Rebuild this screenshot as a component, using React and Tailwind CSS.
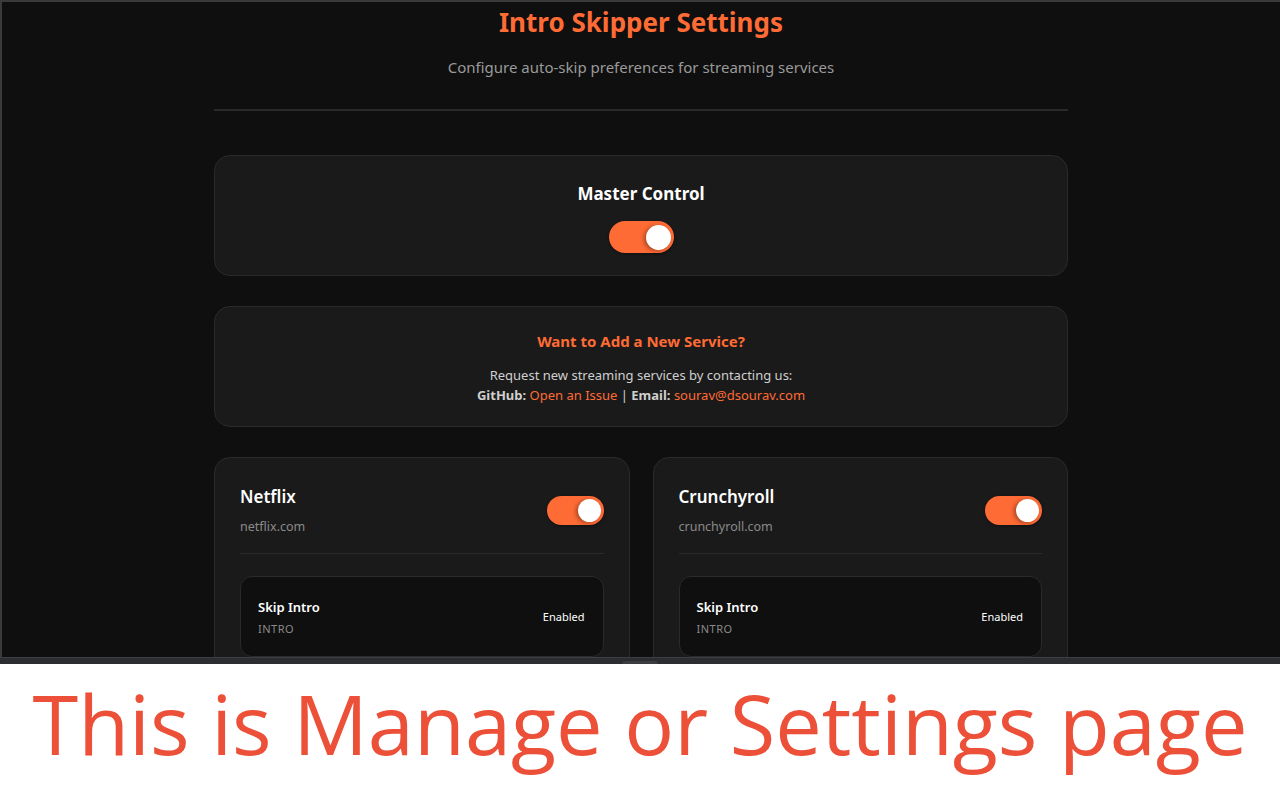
import React from "react";

const font = { fontFamily: '"Noto Sans", "Open Sans", sans-serif' };

const Toggle = ({ size = "lg" }) => {
  const big = size === "lg";
  return (
    <button
      className={
        big
          ? "w-[65px] h-[32px] rounded-full bg-[#ff6b35] flex items-center justify-end pr-[3px] shadow-[0_1px_3px_rgba(0,0,0,0.4)]"
          : "w-[57px] h-[29px] rounded-full bg-[#ff6b35] flex items-center justify-end pr-[3px] shadow-[0_1px_3px_rgba(0,0,0,0.4)]"
      }
    >
      <span
        className={
          big
            ? "w-[25px] h-[25px] rounded-full bg-white shadow-[-2px_1px_4px_rgba(0,0,0,0.35)]"
            : "w-[23px] h-[23px] rounded-full bg-white shadow-[-2px_1px_4px_rgba(0,0,0,0.35)]"
        }
      />
    </button>
  );
};

const ServiceCard = ({ name, domain }) => (
  <div className="bg-[#1a1a1a] border border-[#2a2a2a] rounded-[16px] px-[25px] pt-[26px] h-[260px]">
    <div className="flex items-center justify-between pb-[16px] border-b border-[#2a2a2a]">
      <div>
        <h3 className="text-[17px] leading-[26px] font-semibold text-white">{name}</h3>
        <p className="mt-[7px] text-[12.5px] leading-[20px] text-[#8a8a8a]">{domain}</p>
      </div>
      <Toggle size="sm" />
    </div>
    <div className="mt-[22px] h-[81px] bg-[#0f0f0f] border border-[#2a2a2a] rounded-[12px] pl-[17px] pr-[18px] flex items-center justify-between">
      <div className="pt-[1px]">
        <p className="text-[13px] leading-[20px] font-semibold text-white">Skip Intro</p>
        <p className="mt-[4px] text-[11px] leading-[16px] tracking-[0.5px] text-[#8a8a8a]">INTRO</p>
      </div>
      <span className="text-[11px] leading-[16px] text-white">Enabled</span>
    </div>
  </div>
);

export default function App() {
  return (
    <div className="w-[1280px] h-[800px] bg-white overflow-hidden" style={font}>
      <div className="h-[657px] bg-[#0f0f0f] border-t-2 border-l-2 border-[#3a3a3a] overflow-hidden">
        <div className="w-[854px] ml-[212px] pt-[3px]">
          <header className="text-center pb-[31px] border-b-2 border-[#2a2a2a]">
            <h1 className="text-[26px] leading-[34px] font-bold text-[#ff6b35]">Intro Skipper Settings</h1>
            <p className="mt-[17px] text-[15px] leading-[22px] text-[#9a9a9a]">
              Configure auto-skip preferences for streaming services
            </p>
          </header>

          <section className="mt-[44px] bg-[#1a1a1a] border border-[#2a2a2a] rounded-[16px] pt-[24px] pb-[22px] flex flex-col items-center">
            <h2 className="text-[17px] leading-[28px] font-bold text-white">Master Control</h2>
            <div className="mt-[13px]">
              <Toggle />
            </div>
          </section>

          <section className="mt-[30px] bg-[#1a1a1a] border border-[#2a2a2a] rounded-[16px] pt-[22px] pb-[21px] text-center">
            <h2 className="text-[15px] leading-[24px] font-bold text-[#ff6b35]">Want to Add a New Service?</h2>
            <p className="mt-[12px] text-[13px] leading-[20px] text-[#cfcfcf]">
              Request new streaming services by contacting us:
            </p>
            <p className="text-[13px] leading-[20px] text-[#cfcfcf]">
              <span className="font-bold">GitHub:</span>{" "}
              <a className="text-[#ff6b35]">Open an Issue</a> |{" "}
              <span className="font-bold">Email:</span>{" "}
              <a className="text-[#ff6b35]">sourav@dsourav.com</a>
            </p>
          </section>

          <div className="mt-[30px] grid grid-cols-2 gap-[23px]">
            <ServiceCard name="Netflix" domain="netflix.com" />
            <ServiceCard name="Crunchyroll" domain="crunchyroll.com" />
          </div>
        </div>
      </div>

      <div className="h-[7px] bg-[#2b2d31] border-t border-[#3c3e42] flex justify-center items-end">
        <div className="w-[36px] h-[3px] rounded-t-[3px] bg-[#3a3c40]" />
      </div>

      <div className="pt-[4px] text-center">
        <p
          className="text-[83px] leading-[110px] text-[#ec5038]"
          style={{ fontFamily: '"Open Sans", "Noto Sans", sans-serif' }}
        >
          This is Manage or Settings page
        </p>
      </div>
    </div>
  );
}
